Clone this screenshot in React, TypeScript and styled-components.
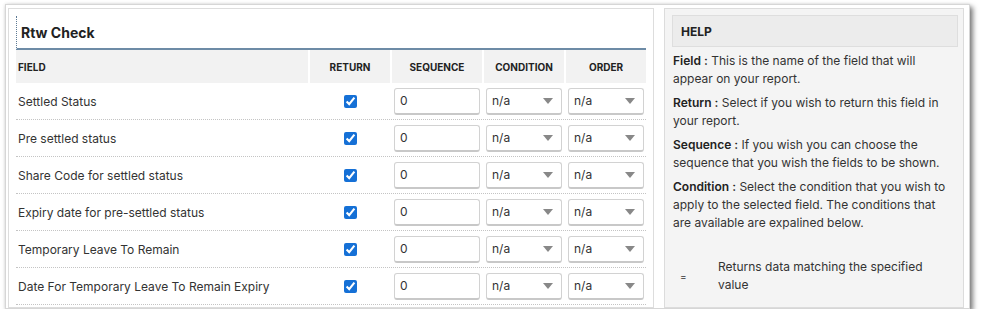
import styled, { createGlobalStyle } from "styled-components";

const GlobalStyle = createGlobalStyle`
  body {
    margin: 0;
    background: #fff;
    font-family: Inter, "Noto Sans", sans-serif;
    color: #333;
  }
`;

const Window = styled.div`
  box-sizing: border-box;
  margin: 4px 0 0 5px;
  width: 965px;
  height: 305px;
  display: flex;
  gap: 10px;
  padding: 3px 5px 0 2px;
  background: #fff;
  border: 1px solid #d6d6d6;
  box-shadow: 3px 3px 5px rgba(0, 0, 0, 0.5), 0 0 3px rgba(0, 0, 0, 0.12);
  overflow: hidden;
`;

const MainPanel = styled.section`
  box-sizing: border-box;
  width: 646px;
  flex: none;
  border: 1px solid #ddd;
  background: #fff;
  padding: 7px 7px 0 7px;
`;

const Title = styled.h2`
  margin: 0;
  height: 32px;
  display: flex;
  align-items: center;
  padding-left: 4px;
  border-left: 1px dotted #5d7a94;
  border-bottom: 2px solid #6d8ba6;
  font-size: 14px;
  font-weight: 700;
  color: #222;
`;

const columns = "292px 80px 90px 80px 80px";

const HeadRow = styled.div`
  display: grid;
  grid-template-columns: ${columns};
  column-gap: 2px;
  height: 33px;
`;

const HeadCell = styled.div<{ $left?: boolean }>`
  background: #f2f2f2;
  display: flex;
  align-items: center;
  justify-content: ${(p) => (p.$left ? "flex-start" : "center")};
  padding-left: ${(p) => (p.$left ? "2px" : "0")};
  font-size: 10px;
  font-weight: 700;
  color: #222;
`;

const Row = styled.div`
  display: grid;
  grid-template-columns: ${columns};
  column-gap: 2px;
  height: 36px;
  border-bottom: 1px dotted #c4c4c4;
  align-items: center;
`;

const FieldName = styled.div`
  padding-left: 2px;
  font-size: 12px;
  color: #333;
`;

const CheckCell = styled.div`
  display: flex;
  justify-content: center;
`;

const Check = styled.input`
  margin: 0;
  width: 13px;
  height: 13px;
  accent-color: #1570d6;
`;

const Control = styled.div`
  box-sizing: border-box;
  height: 27px;
  margin: 0 2px;
  border: 1px solid #d2d2d2;
  border-bottom: 2px solid #c8c8c8;
  border-radius: 3px;
  background: #fff;
  display: flex;
  align-items: center;
  justify-content: space-between;
  padding: 0 8px 0 5px;
  font-size: 12px;
  color: #333;
`;

const Caret = styled.span`
  width: 0;
  height: 0;
  border-left: 5px solid transparent;
  border-right: 5px solid transparent;
  border-top: 6px solid #888;
`;

const HelpPanel = styled.aside`
  box-sizing: border-box;
  width: 300px;
  flex: none;
  background: #f4f4f4;
  border: 1px solid #dcdcdc;
  padding: 6px 5px 0 8px;
`;

const HelpHeader = styled.div`
  box-sizing: border-box;
  height: 32px;
  margin-left: -1px;
  background: #ececec;
  border: 1px solid #dedede;
  display: flex;
  align-items: center;
  padding-left: 8px;
  font-size: 12px;
  font-weight: 700;
  color: #222;
`;

const HelpText = styled.p`
  margin: 5px 12px 0 0;
  font-size: 12px;
  line-height: 18px;
  color: #333;

  & + & {
    margin-top: 6px;
  }

  b {
    font-weight: 600;
    color: #222;
  }
`;

const Conditions = styled.div`
  margin-top: 26px;
  display: grid;
  grid-template-columns: 45px 205px;
  align-items: center;
  font-size: 12px;
  line-height: 18px;
`;

const Symbol = styled.span`
  padding-left: 7px;
  font-size: 10px;
`;

const fields = [
  "Settled Status",
  "Pre settled status",
  "Share Code for settled status",
  "Expiry date for pre-settled status",
  "Temporary Leave To Remain",
  "Date For Temporary Leave To Remain Expiry",
];

const App = () => {
  return (
    <>
      <GlobalStyle />
      <Window>
        <MainPanel>
          <Title>Rtw Check</Title>
          <HeadRow>
            <HeadCell $left>FIELD</HeadCell>
            <HeadCell>RETURN</HeadCell>
            <HeadCell>SEQUENCE</HeadCell>
            <HeadCell>CONDITION</HeadCell>
            <HeadCell>ORDER</HeadCell>
          </HeadRow>
          {fields.map((f) => (
            <Row key={f}>
              <FieldName>{f}</FieldName>
              <CheckCell>
                <Check type="checkbox" checked readOnly />
              </CheckCell>
              <Control>0</Control>
              <Control>
                n/a
                <Caret />
              </Control>
              <Control>
                n/a
                <Caret />
              </Control>
            </Row>
          ))}
        </MainPanel>
        <HelpPanel>
          <HelpHeader>HELP</HelpHeader>
          <HelpText>
            <b>Field :</b> This is the name of the field that will appear on
            your report.
          </HelpText>
          <HelpText>
            <b>Return :</b> Select if you wish to return this field in your
            report.
          </HelpText>
          <HelpText>
            <b>Sequence :</b> If you wish you can choose the sequence that you
            wish the fields to be shown.
          </HelpText>
          <HelpText>
            <b>Condition :</b> Select the condition that you wish to apply to
            the selected field. The conditions that are available are expalined
            below.
          </HelpText>
          <Conditions>
            <Symbol>=</Symbol>
            <span>Returns data matching the specified value</span>
          </Conditions>
        </HelpPanel>
      </Window>
    </>
  );
};

export default App;
